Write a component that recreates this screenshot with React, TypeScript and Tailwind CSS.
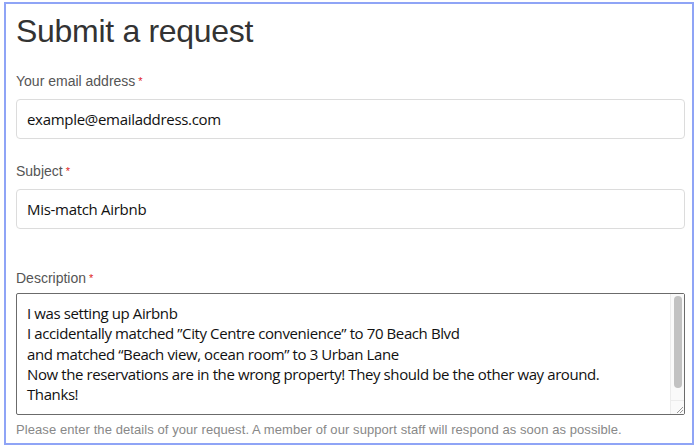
import React from 'react'

function Label({ text }: { text: string }) {
  return (
    <label className="block text-[14px] leading-[18px] text-[#555]">
      {text}
      <span className="ml-[3px] text-[#e01b1b] text-[11px] align-top">*</span>
    </label>
  )
}

function TextInput({ value }: { value: string }) {
  return (
    <div className="mt-[9px] h-[40px] rounded-[4px] border border-[#dcdcdc] bg-white px-[10px] flex items-center text-[15px] text-[#111] font-['Open_Sans',sans-serif] tracking-[-0.3px]">
      {value}
    </div>
  )
}

export default function App() {
  const lines = [
    'I was setting up Airbnb',
    'I accidentally matched \u201dCity Centre convenience\u201d to 70 Beach Blvd',
    'and matched \u201cBeach view, ocean room\u201d to 3 Urban Lane',
    'Now the reservations are in the wrong property! They should be the other way around.',
    'Thanks!',
  ]

  return (
    <div className="w-[698px] h-[448px] bg-white pt-[2px] pl-[4px] font-['Liberation_Sans',Arial,sans-serif]">
      <div className="w-[690px] h-[443px] border-2 border-[#8fa4f6] pl-[10px] pr-[7px]">
        <h1 className="mt-[8px] text-[32px] leading-[38px] text-[#333] tracking-[-0.3px]">Submit a request</h1>

        <div className="mt-[22px]">
          <Label text="Your email address" />
          <TextInput value="example@emailaddress.com" />
        </div>

        <div className="mt-[23px]">
          <Label text="Subject" />
          <TextInput value="Mis-match Airbnb" />
        </div>

        <div className="mt-[40px]">
          <Label text="Description" />
          <div className="mt-[6px] h-[122px] rounded-[2px] border border-[#6b6b6b] bg-white flex">
            <div className="flex-1 pl-[10px] pt-[9px] text-[15px] leading-[20.3px] text-[#111] font-['Open_Sans',sans-serif] tracking-[-0.4px] whitespace-nowrap overflow-hidden">
              {lines.map((l, i) => (
                <div key={i}>{l}</div>
              ))}
            </div>
            <div className="w-[14px] bg-[#fafafa] border-l border-[#ececec] flex flex-col items-center pt-[2px]">
              <div className="w-[8px] h-[92px] rounded-full bg-[#c2c2c2]" />
              <div className="flex-1" />
              <div className="w-full h-[14px] border-t border-[#ececec] flex items-end justify-end">
                <svg width="10" height="10" viewBox="0 0 10 10">
                  <path d="M9 3L3 9M9 6L6 9" stroke="#999" strokeWidth="1" fill="none" />
                </svg>
              </div>
            </div>
          </div>
          <p className="mt-[7px] text-[13px] leading-[15px] tracking-[0.08px] text-[#888]">
            Please enter the details of your request. A member of our support staff will respond as soon as possible.
          </p>
        </div>
      </div>
    </div>
  )
}
